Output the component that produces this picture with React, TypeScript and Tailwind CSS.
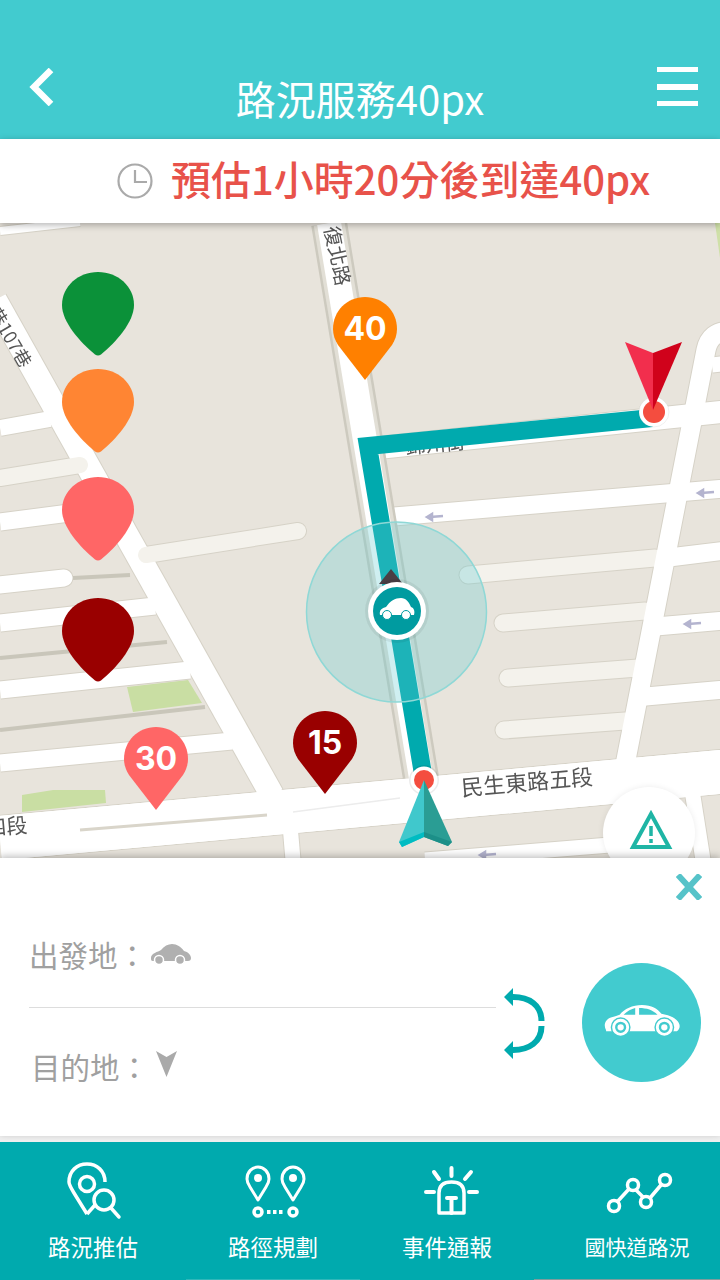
import React from 'react';

const TEAL = '#00aaae';
const AQUA = '#42cbcf';

const PIN_PATH = 'M36 0C56 0 72 14.5 72 33C72 50 54 70 39 82.5Q36 84.5 33 82.5C18 70 0 50 0 33C0 14.5 16 0 36 0Z';
const NUMBER_PIN_PATH = 'M32 0C50 0 64 14 64 32C64 38 62 43 59 48L32 83L5 48C2 43 0 38 0 32C0 14 14 0 32 0Z';

// map roads in page coordinates: [x1, y1, x2, y2, width, colour]
const roads: [number, number, number, number, number, string][] = [
  [-5, 300, 272, 795, 24, '#ffffff'],
  [0, 231, 80, 222, 8, '#ffffff'],
  [0, 428, 50, 419, 16, '#ffffff'],
  [0, 478, 80, 465, 16, '#f4f2ec'],
  [0, 522, 100, 509, 17, '#ffffff'],
  [-10, 586, 64, 578, 17, '#ffffff'],
  [0, 623, 155, 606, 17, '#ffffff'],
  [0, 690, 190, 670, 17, '#ffffff'],
  [0, 763, 232, 741, 17, '#ffffff'],
  [146, 555, 298, 531, 16, '#f4f2ec'],
  [388, 517, 730, 488, 18, '#ffffff'],
  [468, 575, 655, 558, 17, '#f4f2ec'],
  [665, 558, 730, 550, 18, '#ffffff'],
  [503, 623, 645, 611, 17, '#f4f2ec'],
  [650, 627, 730, 620, 18, '#ffffff'],
  [508, 678, 638, 668, 17, '#f4f2ec'],
  [640, 697, 730, 689, 18, '#ffffff'],
  [504, 730, 625, 721, 17, '#f4f2ec'],
  [378, 448, 730, 411, 22, '#ffffff'],
  [712, 365, 730, 363, 15, '#ffffff'],
  [0, 838, 730, 771, 44, '#ffffff'],
  [425, 860, 610, 845, 15, '#ffffff'],
  [692, 790, 703, 860, 15, '#ffffff'],
  [290, 825, 293, 860, 15, '#ffffff'],
];

const rails: [number, number, number, number][] = [
  [73, 578, 130, 575],
  [0, 658, 167, 642],
  [0, 730, 205, 707],
];

const Car = ({
  width,
  height,
  fill,
  back,
}: {
  width: number;
  height: number;
  fill: string;
  back: string;
}) => (
  <svg width={width} height={height} viewBox="0 0 80 34" className="-mt-[5px]">
    <path d="M3 27C0 22 2 16 8 14C11 13 14 12 17 11C22 5 30 1 40 1C50 1 56 5 60 10C66 11 73 13 77 18C80 22 79 26 76 28L3 28Z" fill={fill} />
    <path d="M21 11C25 7 29 5 33 4L33 11ZM37 4C45 4 51 6 56 11L37 11Z" fill={back} />
    <circle cx="18" cy="24" r="9.5" fill={fill} stroke={back} strokeWidth="1.5" />
    <circle cx="18" cy="24" r="4.5" fill="none" stroke={back} strokeWidth="2.5" />
    <circle cx="63" cy="24" r="9.5" fill={fill} stroke={back} strokeWidth="1.5" />
    <circle cx="63" cy="24" r="4.5" fill="none" stroke={back} strokeWidth="2.5" />
  </svg>
);

const LegendPin = ({ y, color }: { y: number; color: string }) => (
  <path d={PIN_PATH} fill={color} transform={`translate(62 ${y})`} />
);

const NumberPin = ({ x, y, color, label }: { x: number; y: number; color: string; label: string }) => (
  <g transform={`translate(${x} ${y})`}>
    <path d={NUMBER_PIN_PATH} fill={color} />
    <text x="32" y="43" textAnchor="middle" fill="#fff" fontSize="32" fontWeight="700" className="font-[Inter,sans-serif]">
      {label}
    </text>
  </g>
);

const MapDrawing = () => (
  <svg viewBox="0 223 720 635" className="absolute inset-0 h-full w-full">
    <g className="blur-[0.4px]">
      <polygon points="715,223 720,223 720,258" fill="#cfe0a8" />
      <polygon points="127,687 188,680 202,703 133,712" fill="#c9dea3" />
      <polygon points="22,795 53,790 105,790 106,803 22,812" fill="#c9dea3" />
      {roads.map((r, i) => (
        <line key={`e${i}`} x1={r[0]} y1={r[1]} x2={r[2]} y2={r[3]} stroke="#d6d2c7" strokeWidth={r[4] + 2} strokeLinecap={r[5] === '#f4f2ec' || i === 5 ? 'round' : 'butt'} />
      ))}
      {rails.map((r, i) => (
        <line key={`r${i}`} x1={r[0]} y1={r[1]} x2={r[2]} y2={r[3]} stroke="#c9c6ba" strokeWidth="4" />
      ))}
      {/* curved road top right */}
      <path d="M730 331Q710 331 706 350L624 770" fill="none" stroke="#d6d2c7" strokeWidth="21" />
      {roads.map((r, i) => (
        <line key={`f${i}`} x1={r[0]} y1={r[1]} x2={r[2]} y2={r[3]} stroke={r[5]} strokeWidth={r[4]} strokeLinecap={r[5] === '#f4f2ec' || i === 5 ? 'round' : 'butt'} />
      ))}
      <path d="M730 331Q710 331 706 350L624 770" fill="none" stroke="#fff" strokeWidth="19" />
      {/* main north-south road with its side strips */}
      <line x1="329" y1="223" x2="423" y2="790" stroke="#cdcabf" strokeWidth="36" />
      <line x1="329" y1="223" x2="423" y2="790" stroke="#e2dfd6" strokeWidth="31" />
      <line x1="329" y1="223" x2="423" y2="790" stroke="#fff" strokeWidth="24" />
      <line x1="0" y1="838" x2="730" y2="771" stroke="#fff" strokeWidth="44" />
      <line x1="80" y1="830" x2="267" y2="815" stroke="#d9d5ca" strokeWidth="3" />
      <line x1="293" y1="812" x2="400" y2="798" stroke="#ececec" strokeWidth="1.5" />
      {/* one way arrows */}
      {[[435, 517], [706, 493], [693, 624], [488, 855]].map(([ax, ay]) => (
        <g key={ax} stroke="#b4b4cf" strokeWidth="2.5" fill="#b4b4cf">
          <line x1={ax - 5} y1={ay} x2={ax + 8} y2={ay - 1} />
          <polygon points={`${ax - 8},${ay} ${ax - 3},${ay - 3} ${ax - 3},${ay + 3}`} />
        </g>
      ))}
      <g fill="#555">
        <text x="462" y="796" fontSize="22" transform="rotate(-5 462 796)">民生東路五段</text>
        <text x="324" y="228" fontSize="20" transform="rotate(78 324 228)">復北路</text>
        <text x="-12" y="312" fontSize="18" transform="rotate(60 -12 312)">巷107巷</text>
        <text x="-14" y="836" fontSize="21" transform="rotate(-5 -14 836)">四段</text>
        <text x="406" y="454" fontSize="20" transform="rotate(-5 406 454)">錦州街</text>
      </g>
    </g>

    {/* route */}
    <path d="M652 418L368 446L424 780" fill="none" stroke={TEAL} strokeWidth="18" strokeLinejoin="miter" />

    <LegendPin y={272} color="#0b9139" />
    <LegendPin y={369} color="#ff8533" />
    <LegendPin y={477} color="#ff6666" />
    <LegendPin y={598} color="#990000" />

    <NumberPin x={333} y={297} color="#ff8000" label="40" />
    <NumberPin x={124} y={727} color="#ff6666" label="30" />
    <NumberPin x={293} y={711} color="#990000" label="15" />

    {/* current position */}
    <circle cx="396.5" cy="612" r="90" fill="#5fc9cf" fillOpacity="0.3" stroke="#8fd8d6" strokeWidth="1.5" />
    <polygon points="391,569 379,584 403,584" fill="#4a3f45" />
    <circle cx="397" cy="611" r="32" fill="#000" fillOpacity="0.06" />
    <circle cx="397" cy="611" r="29" fill="#fff" />
    <circle cx="397" cy="611" r="24" fill="#009ba0" />
    <path d="M380 615C379 610 382 608 386 607C390 601 395 598 401 598C406 598 409 602 411 607C414 608 415 611 414 615Z" fill="#fff" />
    <circle cx="387" cy="615" r="4.5" fill="#fff" stroke="#009ba0" strokeWidth="1" />
    <circle cx="406" cy="615" r="4.5" fill="#fff" stroke="#009ba0" strokeWidth="1" />

    {/* start */}
    <circle cx="424" cy="780" r="15" fill="#000" fillOpacity="0.08" />
    <circle cx="424" cy="780" r="13.5" fill="#fff" />
    <circle cx="424" cy="780" r="10" fill="#f44d3f" />
    <polygon points="424,780 399,842 402,847 424,837" fill="#40c8cc" />
    <polygon points="424,780 452,842 448,846 424,837" fill="#2a9d94" />
    <polygon points="399,842 402,847 424,837 424,832" fill="#00bcc2" />
    <polygon points="452,842 448,846 424,837 424,832" fill="#1c8f88" />

    {/* destination */}
    <circle cx="654" cy="412" r="15" fill="#fff" stroke="#000" strokeOpacity="0.06" />
    <circle cx="654" cy="412" r="11" fill="#f44d3f" />
    <polygon points="625,342 653,353 653,410" fill="#f22e4d" />
    <polygon points="682,342 653,353 653,410" fill="#d0021b" />
  </svg>
);

const NavIcon = ({ box = '0 0 60 56', children }: { box?: string; children: React.ReactNode }) => (
  <svg width="60" height="56" viewBox={box} fill="none" stroke="#fff" strokeWidth="3.5" strokeLinecap="round" strokeLinejoin="round" className="overflow-visible">
    {children}
  </svg>
);

const tabs = [
  {
    label: '路況推估',
    cls: 'text-[22.5px] tracking-normal',
    box: '',
    icon: (
      <NavIcon box="-2 0 60 56">
        <path d="M22 52L9 31C6 26 4 22 4 20C4 9 12 2 22 2C32 2 40 9 40 20" strokeLinecap="butt" />
        <path d="M22 52L30 43" strokeLinecap="butt" />
        <circle cx="22" cy="22" r="7.5" />
        <circle cx="39" cy="38" r="10" />
        <path d="M46 46L54 55" />
      </NavIcon>
    ),
  },
  {
    label: '路徑規劃',
    cls: 'text-[22.5px]',
    box: 'border-b border-[#30b7ba]',
    icon: (
      <NavIcon>
        <path d="M15 38L7 25C5 22 4 19 4 17C4 10 9 5 15 5C21 5 26 10 26 17C26 19 25 22 23 25Z" strokeWidth="3" />
        <circle cx="15" cy="16" r="4" fill="#fff" stroke="none" />
        <path d="M50 38L42 25C40 22 39 19 39 17C39 10 44 5 50 5C56 5 61 10 61 17C61 19 60 22 58 25Z" strokeWidth="3" />
        <circle cx="50" cy="16" r="4" fill="#fff" stroke="none" />
        <circle cx="15" cy="50" r="4" strokeWidth="3.5" />
        <circle cx="50" cy="50" r="4" strokeWidth="3.5" />
        <path d="M24 50H42" strokeDasharray="3.5 2.5" strokeLinecap="butt" strokeWidth="4" />
      </NavIcon>
    ),
  },
  {
    label: '事件通報',
    cls: 'text-[22.5px]',
    box: '',
    icon: (
      <NavIcon>
        <path d="M34.5 6V14M17 10L22 17M54 10L48 17M9 30H17M52 30H60" strokeWidth="4" />
        <path d="M22 51V31C22 23 27 20 34.5 20C42 20 47 23 47 31V51Z" strokeWidth="3.5" />
        <path d="M30 36H39M34.5 36V51" strokeWidth="4" />
      </NavIcon>
    ),
  },
  {
    label: '國快道路況',
    cls: 'text-[21px]',
    box: 'pl-5 border-b border-[#7f9c9d]',
    icon: (
      <NavIcon>
        <circle cx="7" cy="44" r="5.5" />
        <circle cx="26" cy="23" r="5.5" />
        <circle cx="39" cy="40" r="5.5" />
        <circle cx="58" cy="18" r="5.5" />
        <path d="M11 39L22 27M29 28L36 35M43 36L54 23" strokeLinecap="butt" />
      </NavIcon>
    ),
  },
];

export default function App() {
  return (
    <div className="flex h-[1280px] w-[720px] flex-col overflow-hidden bg-[#f0f0f0] font-[Noto_Sans_CJK_TC,sans-serif]">
      {/* header */}
      <header className="relative z-20 flex h-[139px] shrink-0 items-end justify-between bg-[#42cbcf] pr-[22px] pl-[28px]">
        <button className="mb-[33px] w-[35px]">
          <svg width="26" height="38" viewBox="0 0 26 38" fill="none" stroke="#fff" strokeWidth="6.5">
            <path d="M23 2L6 19L23 36" />
          </svg>
        </button>
        <h1 className="mb-[12px] text-[40px] leading-[58px] font-normal text-white">路況服務40px</h1>
        <button className="mb-[33px] flex w-[41px] flex-col gap-[11.5px]">
          <span className="h-[5px] bg-white" />
          <span className="h-[6px] bg-white" />
          <span className="h-[5px] bg-white" />
        </button>
      </header>

      {/* arrival estimate */}
      <div className="relative z-20 flex h-[84px] shrink-0 items-center bg-white pl-[117px] shadow-[0_2px_7px_rgba(0,0,0,0.3)]">
        <svg width="36" height="36" viewBox="0 0 36 36" fill="none" stroke="#aaa" strokeWidth="2.2">
          <circle cx="18" cy="18" r="16.5" />
          <path d="M18 7V19H30" />
        </svg>
        <span className="-mt-[6px] ml-[18px] text-[40px] leading-[58px] font-medium text-[#e8524a]">預估1小時20分後到達40px</span>
      </div>

      {/* map */}
      <div className="relative h-[635px] shrink-0 overflow-hidden bg-[#e8e4dc]">
        <MapDrawing />
        <button className="absolute top-[564px] left-[603px] flex h-[92px] w-[92px] justify-center rounded-full bg-white pt-[22px] pl-[4px] shadow-[0_0_6px_rgba(0,0,0,0.08)]">
          <svg width="44" height="42" viewBox="0 0 44 42" fill="none">
            <path d="M22 5L40 38H4Z" stroke="#1fb5a5" strokeWidth="4" />
            <path d="M22 17V27M22 30V34" stroke="#1fb5a5" strokeWidth="3.5" />
          </svg>
        </button>
      </div>

      {/* route panel */}
      <section className="relative z-20 flex h-[278px] shrink-0 bg-white shadow-[0_-2px_7px_rgba(0,0,0,0.25)]">
        <button className="absolute top-[16px] right-[18px]">
          <svg width="26" height="26" viewBox="0 0 26 26" stroke="#56c3c9" strokeWidth="6">
            <path d="M2 1L24 25M24 1L2 25" />
          </svg>
        </button>
        <div className="ml-[29px] flex w-[467px] flex-col">
          <div className="flex h-[150px] items-end border-b border-[#dddddd] pb-[32px] text-[29.5px] leading-[42px] text-[#a0a0a0]">
            <span>出發地：</span>
            <svg width="41" height="22" viewBox="0 0 41 22" className="mb-[9px] ml-[3px]">
              <path d="M1 14C1 9 8 8 11 6C14 2 18 0 22 0C27 0 31 3 34 7C38 8 41 11 41 14C41 16 40 17 38 17L3 17C1 17 1 16 1 14Z" fill="#b0b0b0" />
              <circle cx="9" cy="16" r="4.5" fill="#b0b0b0" stroke="#fff" strokeWidth="1.5" />
              <circle cx="30" cy="16" r="4.5" fill="#b0b0b0" stroke="#fff" strokeWidth="1.5" />
            </svg>
          </div>
          <div className="ml-[2px] flex items-start pt-[37px] text-[29.5px] leading-[42px] text-[#a0a0a0]">
            <span>目的地：</span>
            <svg width="21" height="26" viewBox="0 0 21 26" className="mt-[6px] ml-[7px]" fill="#aaaaaa">
              <path d="M0 0L10.5 6L21 0L10.5 26Z" />
            </svg>
          </div>
        </div>
        <svg width="44" height="74" viewBox="0 0 44 74" fill="none" className="mt-[129px] ml-[7px]">
          <path d="M10 10C26 10 38.5 18 38.5 34" stroke={TEAL} strokeWidth="6" />
          <path d="M10 63C26 63 38.5 55 38.5 39" stroke={TEAL} strokeWidth="6" />
          <path d="M10 1V19L1 10ZM10 54V72L1 63Z" fill={TEAL} />
        </svg>
        <button className="mt-[105px] ml-[35px] flex h-[119px] w-[119px] items-center justify-center self-start rounded-full bg-[#42cbcf]">
          <Car width={78} height={33} fill="#fff" back={AQUA} />
        </button>
      </section>

      {/* bottom tabs */}
      <nav className="mt-auto grid h-[138px] shrink-0 grid-cols-[186px_174px_174px_186px] bg-[#00aaae] text-white">
        {tabs.map((t) => (
          <div key={t.label} className={`flex flex-col items-center pt-[20px] ${t.box}`}>
            {t.icon}
            <span className={`mt-[12px] leading-[32px] ${t.cls}`}>{t.label}</span>
          </div>
        ))}
      </nav>
    </div>
  );
}
